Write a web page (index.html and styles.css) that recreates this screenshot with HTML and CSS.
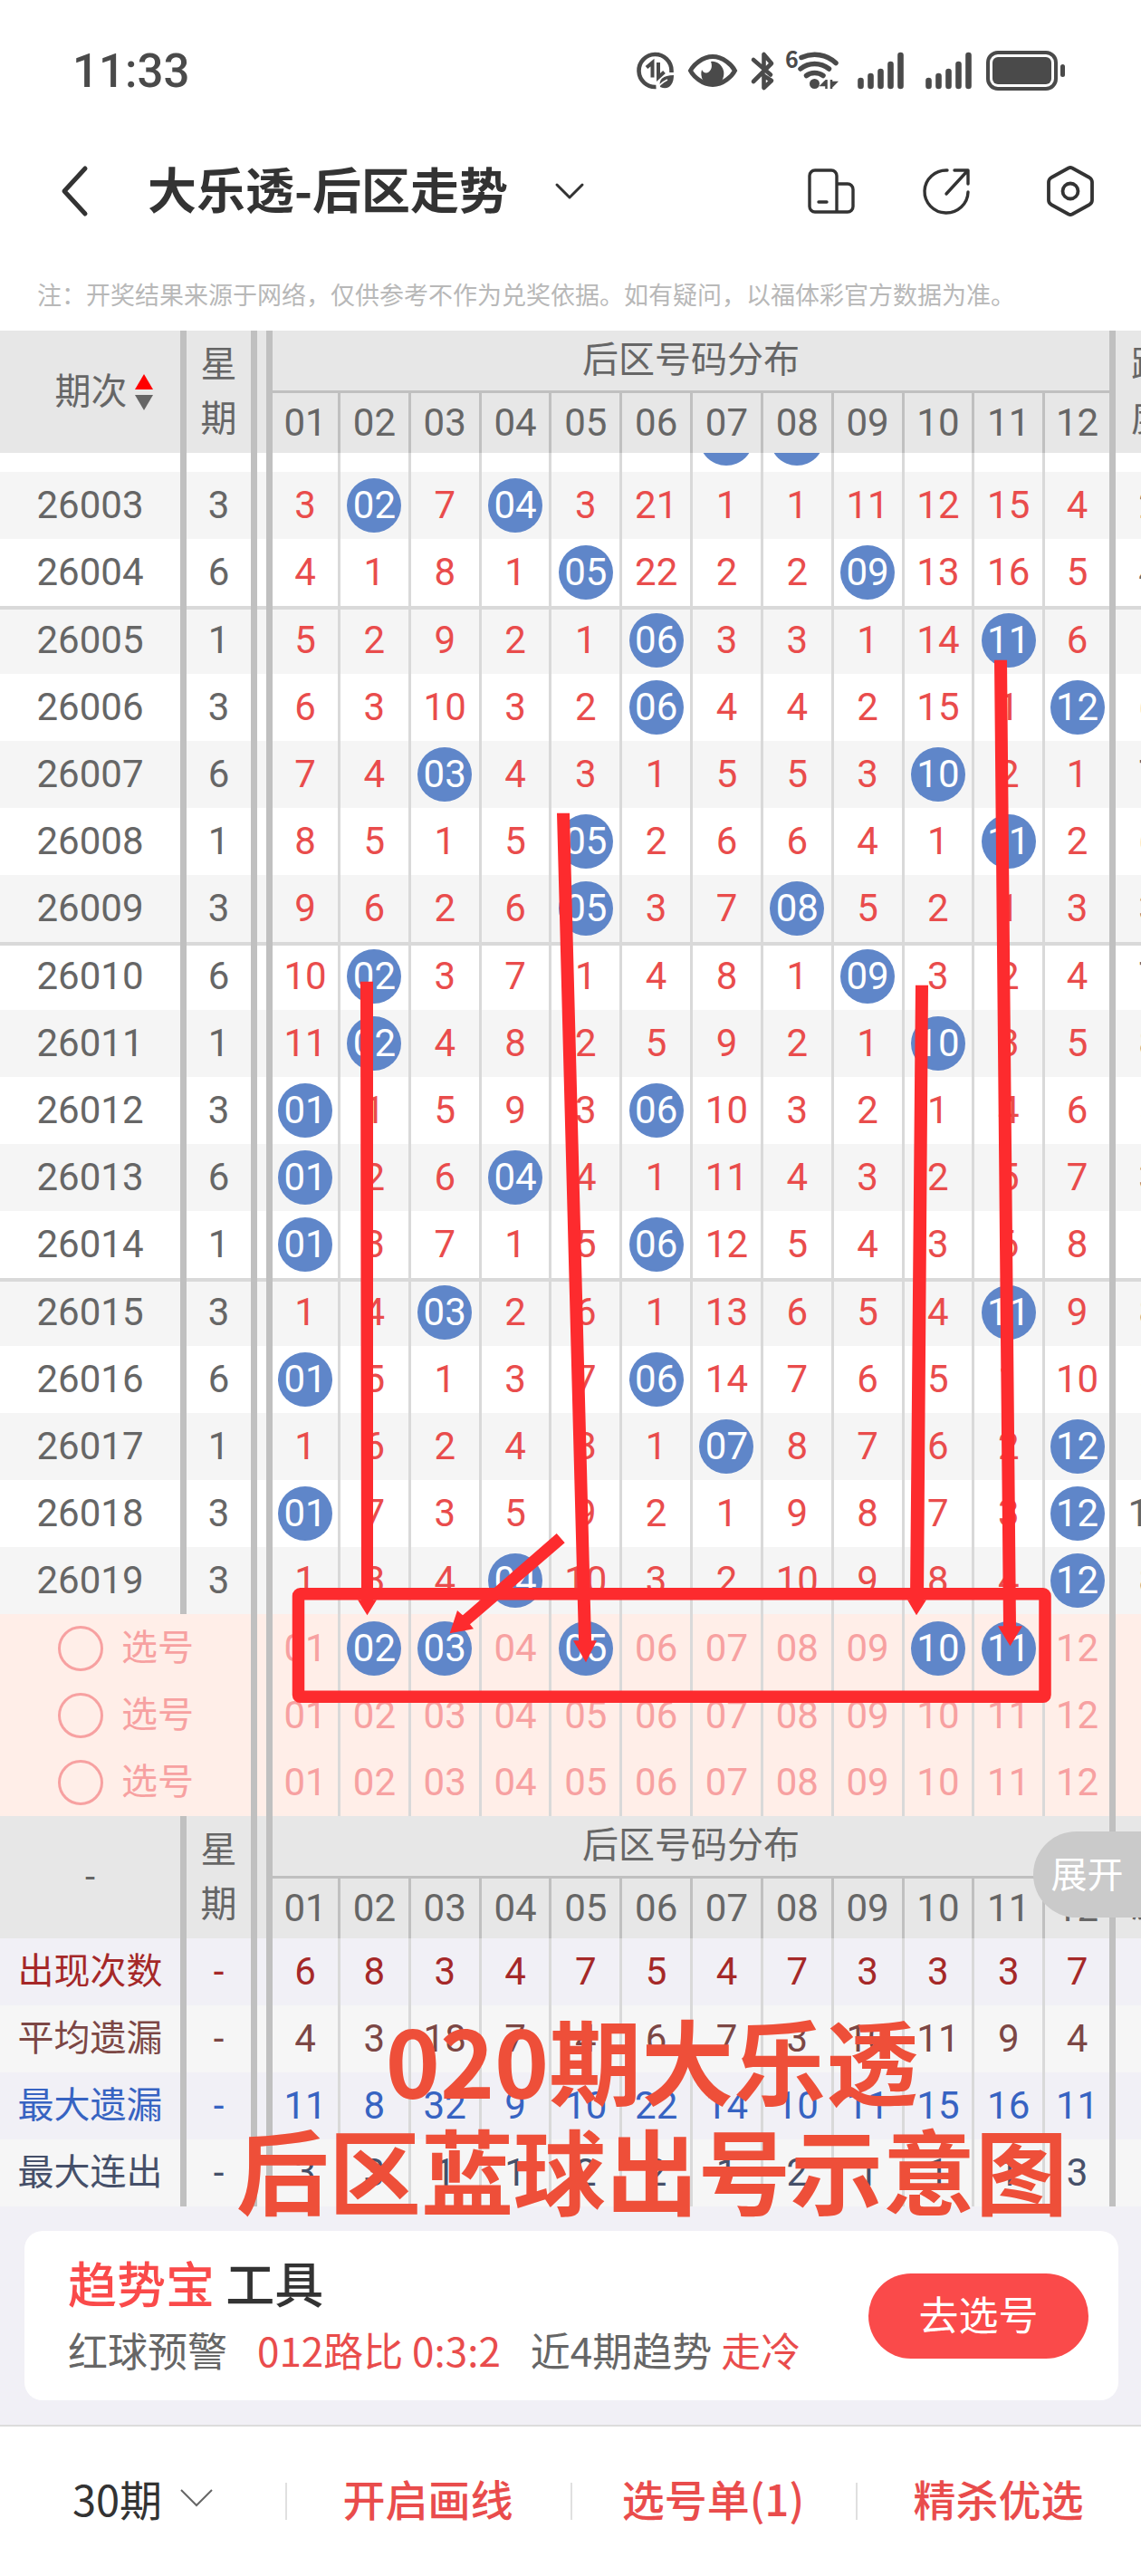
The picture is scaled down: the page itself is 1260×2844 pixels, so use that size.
FILE: index.html
```html
<!DOCTYPE html>
<html lang="zh-CN">
<head>
<meta charset="utf-8">
<meta name="viewport" content="width=device-width, initial-scale=1">
<title>大乐透-后区走势</title>
<link rel="stylesheet" href="styles.css">
</head>
<body>
<div class="status">
  <time class="clock">11:33</time>
  <div class="status-icons">
    <svg width="41" height="44" viewBox="703 56 41 44" aria-hidden="true">
      <path d="M724.5 96a18 18 0 1 1 17-18v2" fill="none" stroke="#4a4a4a" stroke-width="4.6"/>
      <path d="M720.5 85.500v-16.500l-6.500 5.500M727 69v16.500l6.500-6" fill="none" stroke="#4a4a4a" stroke-width="4"/>
      <path d="M744 83c-12 0-17 5-15 13 9 4 15-2 15-13z" fill="#4a4a4a"/>
      <path d="M725 100c2-6 6-9 12-12" fill="none" stroke="#fff" stroke-width="1.600"/>
    </svg>
    <svg width="54" height="44" viewBox="760 56 54 44" aria-hidden="true">
      <path d="M762.500 78c3-6 13-15.500 24.500-15.500s21.500 9.500 24.500 15.500c-3 6-13 15.500-24.500 15.500s-21.500-9.500-24.500-15.500z" fill="none" stroke="#4a4a4a" stroke-width="5"/>
      <path d="M785 68a12.500 13.500 0 1 1-10 9c4 8 14 1 10-9z" fill="#4a4a4a"/>
    </svg>
    <svg width="23" height="44" viewBox="830 56 23 44" aria-hidden="true">
      <path d="M832 66l19 16.500M832 90l20-20-8.500-10v15M844 84l8 5-8.500 8v-14" fill="none" stroke="#4a4a4a" stroke-width="4.600" stroke-linecap="round" stroke-linejoin="round"/>
    </svg>
    <svg width="62" height="44" viewBox="869 56 62 44" aria-hidden="true">
      <text x="867" y="75" class="wifi-gen">6</text>
      <g fill="none" stroke="#4a4a4a" stroke-width="5.500" stroke-linecap="round">
        <path d="M885 63.500c13-6 28-3.500 38 6"/>
        <path d="M884 76c9-7.500 22-7.500 31.500 0"/>
        <path d="M890.500 83.500c5-4 13-4 18.500 0"/>
      </g>
      <circle cx="899.500" cy="92.500" r="5.500" fill="#4a4a4a"/>
      <path d="M912.500 88v10M912.500 89l-5 5h5M918 88v10M918 96l5-5h-5" fill="#4a4a4a" stroke="#4a4a4a" stroke-width="2.500"/>
    </svg>
    <svg width="59" height="44" viewBox="947 56 59 44" aria-hidden="true">
      <path d="M950.500 89v6M961.500 84v11M972.500 79v16M983.500 71v24M994.500 61v34" stroke="#4a4a4a" stroke-width="6.600" stroke-linecap="round"/>
    </svg>
    <svg width="51" height="44" viewBox="947 56 51 44" aria-hidden="true">
      <path d="M950.500 89v6M961.500 84v11M972.500 79v16M983.500 71v24M994.500 61v34" stroke="#4a4a4a" stroke-width="6.600" stroke-linecap="round"/>
    </svg>
    <svg width="87" height="44" viewBox="1089 56 87 44" aria-hidden="true">
      <rect x="1091" y="58" width="75" height="40" rx="11" fill="none" stroke="#4a4a4a" stroke-width="4"/>
      <rect x="1096" y="63" width="65" height="30" rx="6" fill="#4a4a4a"/>
      <rect x="1171" y="71" width="5" height="14" rx="2.500" fill="#4a4a4a"/>
    </svg>
  </div>
</div>

<header class="nav">
  <button class="icon-btn" aria-label="返回">
    <svg width="30" height="56" viewBox="0 0 30 56"><path d="M27 3L4 28l23 25" fill="none" stroke="#333" stroke-width="5" stroke-linecap="round" stroke-linejoin="round"/></svg>
  </button>
  <h1 class="nav-title">大乐透-后区走势</h1>
  <button class="icon-btn nav-drop" aria-label="切换走势">
    <svg width="32" height="18" viewBox="0 0 32 18"><path d="M2 2l14 14L30 2" fill="none" stroke="#333" stroke-width="3" stroke-linecap="round" stroke-linejoin="round"/></svg>
  </button>
  <div class="nav-tools">
    <button class="icon-btn" aria-label="横竖屏">
      <svg width="52" height="56" viewBox="0 0 52 56" fill="none" stroke="#333" stroke-width="3.400" stroke-linejoin="round" stroke-linecap="round"><path d="M8 5h18a6 6 0 0 1 6 6v40H8a6 6 0 0 1-6-6V11a6 6 0 0 1 6-6zM32 20h12a6 6 0 0 1 6 6v19a6 6 0 0 1-6 6H30M12 40h9"/></svg>
    </button>
    <button class="icon-btn share" aria-label="分享">
      <svg width="52" height="56" viewBox="0 0 52 56" fill="none" stroke="#333" stroke-width="3.400" stroke-linejoin="round" stroke-linecap="round"><path d="M26 5A24 23.500 0 1 0 49 29M34 5h15v15M48 6L25 31"/></svg>
    </button>
    <button class="icon-btn" aria-label="设置">
      <svg width="52" height="56" viewBox="0 0 52 56" fill="none" stroke="#333" stroke-width="3.800" stroke-linejoin="round"><path d="M24 2.500q2-1 4 0l19 10.500q3 2 3 5v20q0 3-3 5L28 53.500q-2 1-4 0L5 43q-3-2-3-5V18q0-3 3-5z"/><circle cx="26" cy="28" r="8.500"/></svg>
    </button>
  </div>
</header>

<p class="notice">注：开奖结果来源于网络，仅供参考不作为兑奖依据。如有疑问，以福体彩官方数据为准。</p>

<main class="board">
  <table class="grid head" id="head">
    <colgroup><col class="c-period"><col class="c-week"><col class="c-gap"><col class="c-first"><col span="11"><col class="c-span"></colgroup>
    <thead>
      <tr>
        <th rowspan="2" class="thick"><span class="sort">期次<svg width="20" height="42" viewBox="0 0 20 42" aria-hidden="true"><path d="M10 1l10 17H0z" fill="#f00"/><path d="M10 41L0 24h20z" fill="#666"/></svg></span></th>
        <th rowspan="2" class="thick week">星<br>期</th>
        <th rowspan="2" class="thick"></th>
        <th colspan="12" class="thick zone">后区号码分布</th>
        <th rowspan="2" class="week">跨<br>度</th>
      </tr>
      <tr class="numbers"></tr>
    </thead>
  </table>
  <div class="scroll">
    <table class="grid">
      <colgroup><col class="c-period"><col class="c-week"><col class="c-gap"><col class="c-first"><col span="11"><col class="c-span"></colgroup>
      <tbody id="draws"></tbody>
      <tbody id="picks"></tbody>
    </table>
  </div>
  <div class="summary">
    <table class="grid head">
      <colgroup><col class="c-period"><col class="c-week"><col class="c-gap"><col class="c-first"><col span="11"><col class="c-span"></colgroup>
      <thead>
        <tr>
          <th rowspan="2" class="thick">-</th>
          <th rowspan="2" class="thick week">星<br>期</th>
          <th rowspan="2" class="thick"></th>
          <th colspan="12" class="thick zone">后区号码分布</th>
          <th rowspan="2" class="week">跨<br>度</th>
        </tr>
        <tr class="numbers"></tr>
      </thead>
      <tbody id="stats"></tbody>
    </table>
    <button class="expand">展开</button>
  </div>
  <svg class="marks" viewBox="0 365 1260 2072" preserveAspectRatio="none" aria-hidden="true">
    <g fill="#fd2b2e">
      <path d="M398 1084h14v683h4l-10.500 17-10.500-17h4z"/>
      <path d="M615 898h14l24 914h6l-12 24-14-24h6z"/>
      <path d="M1011 1088h14l-5 679h3l-11 17-10-17h3z"/>
      <path d="M1098 729h14l10 1067h7l-13.500 22-13.500-22h6z"/>
      <path d="M614.700 1693.700l9 10.300L519 1794l4 5-26.300 5 8.300-25.300 6 5.300z"/>
    </g>
    <rect x="329.500" y="1760.500" width="824.500" height="113.500" rx="2" fill="none" stroke="#fd2b2e" stroke-width="13.500" stroke-linejoin="round"/>
  </svg>
  <p class="caption">020期大乐透<br>后区蓝球出号示意图</p>
</main>

<section class="tool">
  <div class="tool-card">
    <div>
      <h2 class="tool-title"><span class="red">趋势宝</span> 工具</h2>
      <p class="tool-info"><span>红球预警</span><span class="red-text">012路比 0:3:2</span><span>近4期趋势 <span class="red-text">走冷</span></span></p>
    </div>
    <button class="go">去选号</button>
  </div>
</section>

<nav class="tabs">
  <button class="tab tab-dark">30期<svg width="36" height="20" viewBox="0 0 36 20" aria-hidden="true"><path d="M1 1l17 17L35 1" fill="none" stroke="#666" stroke-width="2"/></svg></button>
  <button class="tab">开启画线</button>
  <button class="tab">选号单(1)</button>
  <button class="tab">精杀优选</button>
</nav>
<script src="app.js"></script>
</body>
</html>
```
FILE: styles.css
```css
* { box-sizing: border-box; }

body {
  margin: 0;
  background: #fff;
  color: #333;
  font-family: "Noto Sans CJK SC", sans-serif;
  overflow-x: hidden;
}

h1, h2, p { margin: 0; }

button {
  margin: 0;
  padding: 0;
  border: 0;
  background: none;
  color: inherit;
  font: inherit;
}

svg { display: block; overflow: visible; }

.status {
  display: flex;
  justify-content: space-between;
  align-items: center;
  padding: 56px 84px 0 80px;
}

.clock {
  padding-top: 2px;
  color: #4a4a4a;
  font: 500 51px/42px Roboto, sans-serif;
}

.status-icons { display: flex; gap: 16px; }

.wifi-gen { fill: #4a4a4a; font: 700 25px "Noto Sans CJK SC", sans-serif; }

.nav {
  display: flex;
  align-items: center;
  height: 110px;
  margin-top: 56px;
  padding: 0 52px 0 67px;
}

.nav-title {
  margin-left: 66px;
  padding-bottom: 6px;
  font-size: 54px;
  font-weight: 700;
  line-height: 80px;
}

.nav-drop { margin-left: 52px; }

.nav-tools {
  display: flex;
  gap: 76px;
  margin-left: auto;
}

.share { margin-right: 8px; }

.notice {
  padding: 39px 41px 20px;
  color: #b8b8b8;
  font-size: 27px;
  line-height: 40px;
}

.board { position: relative; overflow-x: clip; }

.scroll { overflow: hidden; }

/* The last draw before the visible ones is scrolled under the head. */
.scroll .grid { margin-top: -53px; }

.summary { position: relative; }

.grid {
  width: calc(100% + 46px);
  table-layout: fixed;
  border-collapse: separate;
  border-spacing: 0;
  color: #666;
  font-family: Roboto, "Noto Sans CJK SC", sans-serif;
  font-size: 42px;
}

.c-period { width: 206px; }
.c-week { width: 78px; }
.c-gap { width: 17px; }
.c-first { width: 75px; }
.c-span { width: 74px; }

.grid th, .grid td {
  height: 74px;
  padding: 0;
  border-right: 3px solid #d9d9d9;
  font-weight: 400;
  line-height: 60px;
  text-align: center;
  vertical-align: middle;
}

.grid .thick { border-right: 7px solid #c0c0c0; }
.grid tr > :last-child:not(.thick) { border-right: 0; }

.grid thead { background: #e7e7e7; }

.grid thead th { border-color: #c0c0c0; font-size: 40px; }

.grid thead .zone {
  height: 69px;
  border-bottom: 3px solid #c0c0c0;
}

.grid .numbers th { height: 66px; font-size: 42px; }
.grid .numbers th:last-child { border-right: 7px solid #c0c0c0; }

.sort {
  display: flex;
  justify-content: center;
  align-items: center;
  gap: 8px;
  padding-left: 30px;
}

#draws td { color: #e94c4c; }
#draws .plain { color: #666; }
#draws tr:nth-child(even) { background: #f5f5f5; }
#draws .group td { height: 75px; }
#draws .group { background: linear-gradient(#d9d9d9 4px, #fff 4px); }
#draws .group:nth-child(even) { background: linear-gradient(#d9d9d9 4px, #f5f5f5 4px); }

.ball {
  display: block;
  width: 60px;
  height: 60px;
  margin: 0 auto;
  border-radius: 50%;
}

#draws .ball, .ball[aria-pressed="true"] {
  background: #5f86c9;
  color: #fff;
}

#picks { background: #ffeee8; color: #f7a1a1; }
#picks tr:first-child td { height: 75px; }

.pick {
  display: flex;
  align-items: center;
  gap: 20px;
  padding-left: 64px;
  font-size: 40px;
}

.pick input {
  appearance: none;
  width: 50px;
  height: 50px;
  margin: 0;
  border: 3px solid #f7a1a1;
  border-radius: 50%;
}

#stats tr { background: #f1f0f6; }
#stats tr:nth-child(even) { background: #f6f6f6; }
#stats th { font-size: 40px; }
#stats .s-count { color: #a52828; }
#stats .s-average { color: #7c4745; }
#stats .s-longest { color: #3763c2; }
#stats .s-streak { color: #465069; }

.expand {
  position: absolute;
  top: 17px;
  right: 0;
  width: 119px;
  height: 95px;
  padding-bottom: 6px;
  border-radius: 48px 0 0 48px;
  background: #cacaca;
  color: #fff;
  font-size: 40px;
}

.marks {
  position: absolute;
  top: 0;
  left: 0;
  width: 100%;
  height: 100%;
  pointer-events: none;
}

.caption {
  position: absolute;
  z-index: 1;
  bottom: -18px;
  left: 261px;
  color: #ee4f39;
  font-size: 102px;
  font-weight: 700;
  line-height: 121px;
  text-align: center;
  white-space: nowrap;
}

.tool {
  padding: 27px 25px 27px 27px;
  border-bottom: 2px solid #dcdcdc;
  background: #f1f0f6;
}

.tool-card {
  display: flex;
  justify-content: space-between;
  align-items: center;
  padding: 20px 33px 19px 48px;
  border-radius: 20px;
  background: #fff;
}

.tool-title {
  font-size: 54px;
  font-weight: 500;
  line-height: 74px;
}

.tool-info {
  display: flex;
  gap: 33px;
  color: #666;
  font-size: 44px;
  line-height: 74px;
}

.red { color: #fa4a4a; }
.red-text { color: #e94c4c; }

.go {
  width: 243px;
  height: 94px;
  padding-bottom: 6px;
  border-radius: 47px;
  background: #fa4a4a;
  color: #fff;
  font-size: 44px;
}

.tabs { display: flex; height: 165px; }

.tab {
  display: flex;
  flex: 1;
  justify-content: center;
  align-items: center;
  gap: 20px;
  padding-bottom: 8px;
  color: #e94c4c;
  font-size: 47px;
  font-weight: 500;
  background: linear-gradient(#e0e0e0, #e0e0e0) left center / 2px 41px no-repeat;
}

.tab-dark { background: none; color: #333; font-weight: 400; }
```
FILE: app.js
```js
const two = n => String(n).padStart(2, '0');
const balls = Array.from({ length: 12 }, (_, i) => i + 1);

// period, weekday, drawn numbers
const draws = [
  ['26003', 3, 2, 4], ['26004', 6, 5, 9], ['26005', 1, 6, 11], ['26006', 3, 6, 12],
  ['26007', 6, 3, 10], ['26008', 1, 5, 11], ['26009', 3, 5, 8], ['26010', 6, 2, 9],
  ['26011', 1, 2, 10], ['26012', 3, 1, 6], ['26013', 6, 1, 4], ['26014', 1, 1, 6],
  ['26015', 3, 3, 11], ['26016', 6, 1, 6], ['26017', 1, 7, 12], ['26018', 3, 1, 12],
  ['26019', 3, 4, 12]
];

// draws since each number last came up, before the first listed period
const missed = [2, 0, 6, 0, 2, 20, 0, 0, 10, 11, 14, 3];

const cell = (n, text) => `<td${n === 12 ? ' class="thick"' : ''}>${text}</td>`;

document.querySelectorAll('.numbers').forEach(row => {
  row.innerHTML = balls.map(n => `<th>${two(n)}</th>`).join('');
});

let rows = '<tr><td class="thick"></td><td class="thick"></td><td class="thick"></td>' +
  balls.map(n => cell(n, n === 7 || n === 8 ? '<span class="ball"></span>' : '')).join('') + '<td></td></tr>';

draws.forEach(([period, day, a, b], index) => {
  rows += `<tr${index % 5 === 2 ? ' class="group"' : ''}><td class="thick plain">${period}</td><td class="thick plain">${day}</td><td class="thick"></td>`;
  balls.forEach((n, i) => {
    const hit = n === a || n === b;
    missed[i] = hit ? 0 : missed[i] + 1;
    rows += cell(n, hit ? `<span class="ball">${two(n)}</span>` : missed[i]);
  });
  rows += `<td class="plain">${b - a}</td></tr>`;
});
document.getElementById('draws').innerHTML = rows;

const picks = [[2, 3, 5, 10, 11], [], []];
document.getElementById('picks').innerHTML = picks.map(chosen =>
  '<tr><th colspan="2" class="thick"><label class="pick"><input type="checkbox">选号</label></th><td class="thick"></td>' +
  balls.map(n => cell(n, `<button class="ball" aria-pressed="${chosen.includes(n)}">${two(n)}</button>`)).join('') +
  '<td></td></tr>').join('');

const stats = [
  ['s-count', '出现次数', [6, 8, 3, 4, 7, 5, 4, 7, 3, 3, 3, 7]],
  ['s-average', '平均遗漏', [4, 3, 18, 7, 4, 6, 7, 3, 10, 11, 9, 4]],
  ['s-longest', '最大遗漏', [11, 8, 32, 9, 10, 22, 14, 10, 11, 15, 16, 11]],
  ['s-streak', '最大连出', [3, 3, 1, 1, 2, 2, 1, 2, 1, 1, 1, 3]]
];
document.getElementById('stats').innerHTML = stats.map(([name, label, values]) =>
  `<tr class="${name}"><th class="thick">${label}</th><td class="thick">-</td><td class="thick"></td>` +
  values.map((v, i) => cell(i + 1, v)).join('') + '<td></td></tr>').join('');
```
